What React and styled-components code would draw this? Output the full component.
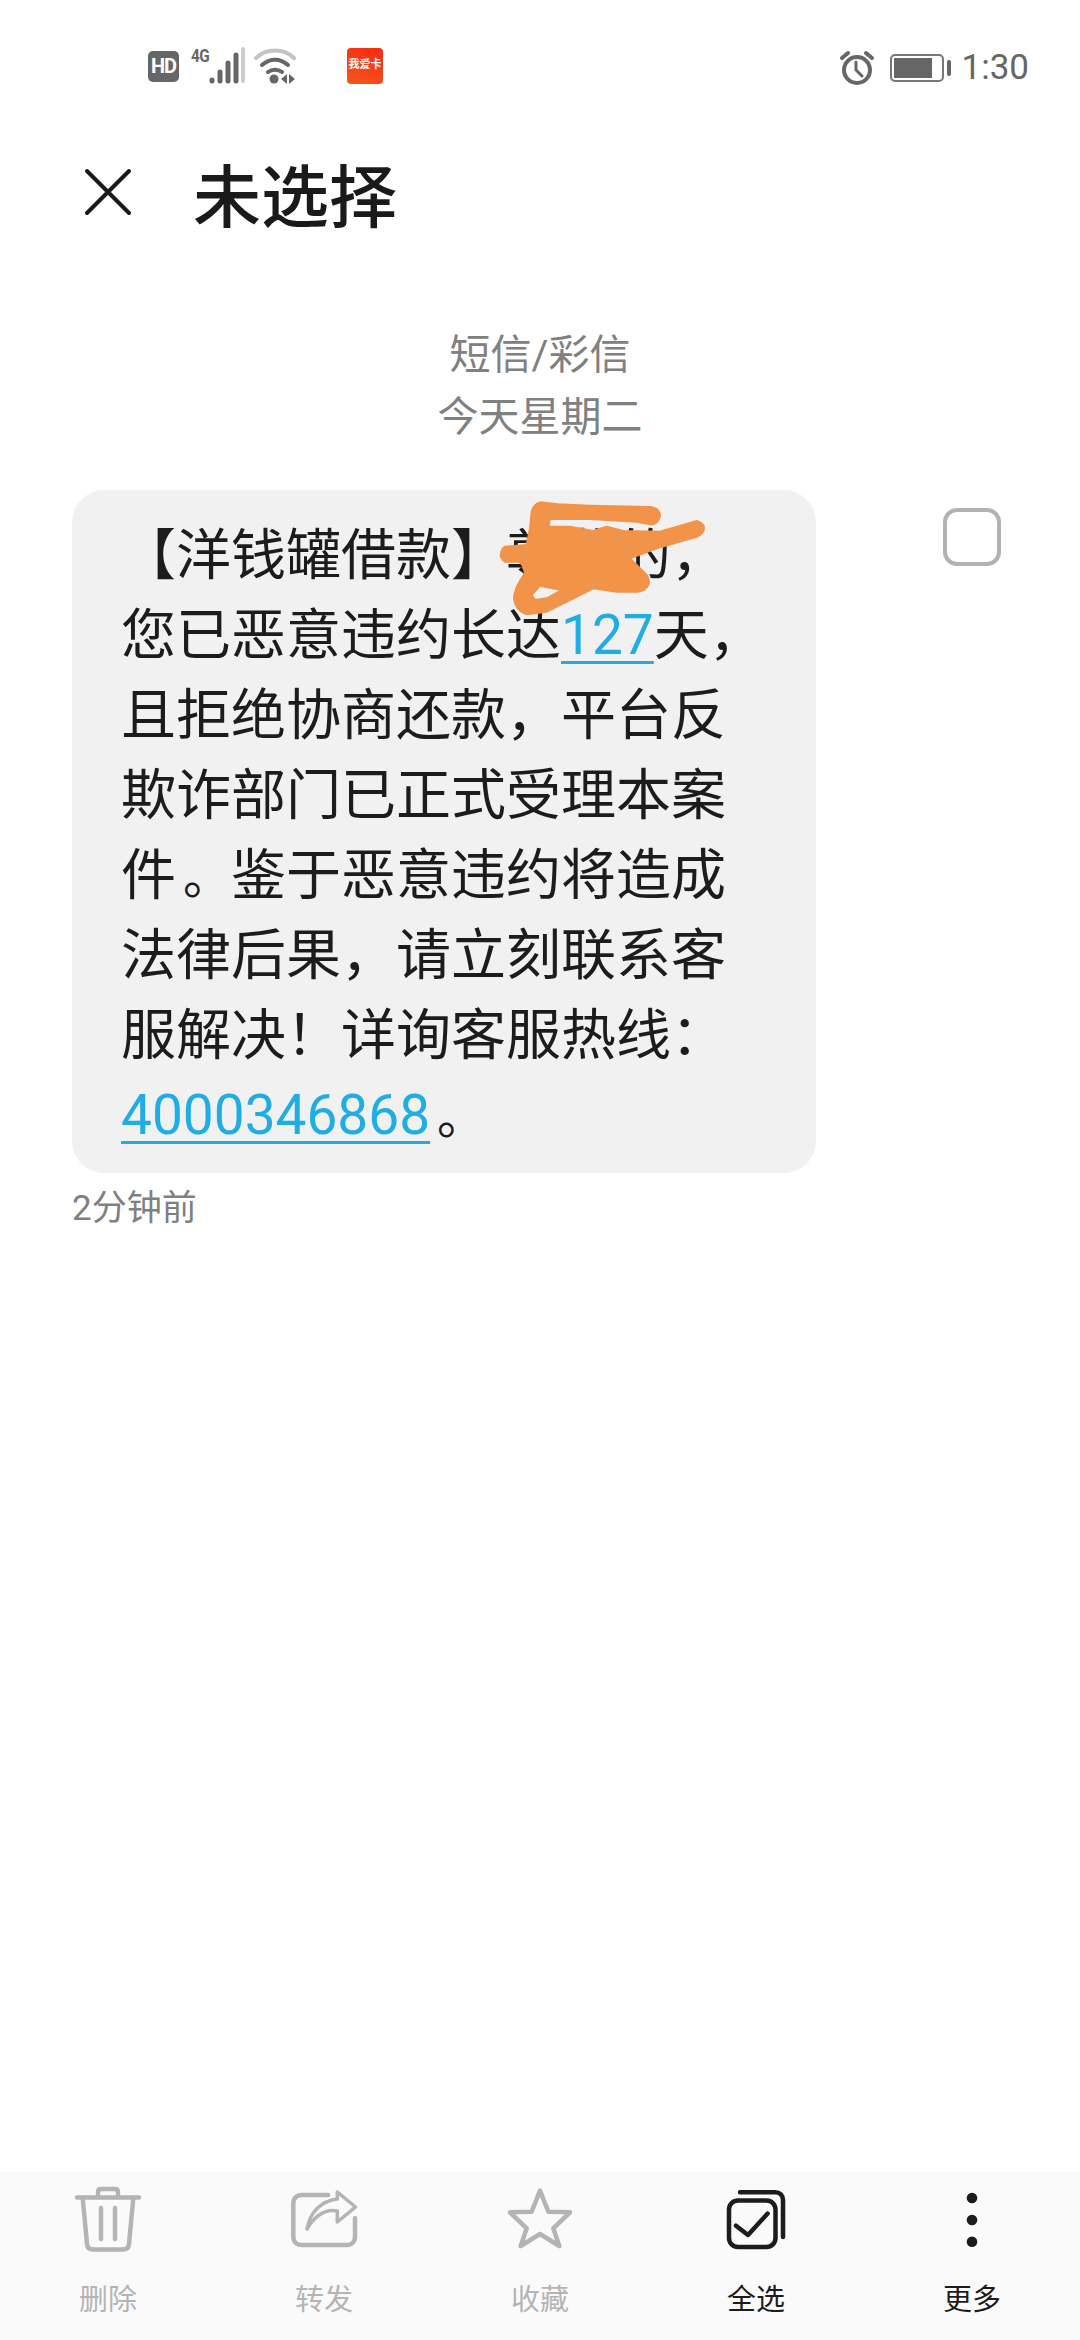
import React from 'react';
import styled, { createGlobalStyle } from 'styled-components';

const GlobalStyle = createGlobalStyle`
  html, body {
    margin: 0;
    padding: 0;
    background: #fff;
    font-family: Roboto, "Noto Sans CJK SC", sans-serif;
  }
`;

const Page = styled.div`
  width: 1080px;
  height: 2340px;
  display: flex;
  flex-direction: column;
  overflow: hidden;
  background: #fff;
`;

const StatusBar = styled.div`
  height: 130px;
  flex: none;
  display: flex;
  align-items: flex-start;
  padding: 47px 51px 0 148px;
  box-sizing: border-box;
  color: #666;
`;

const HdBadge = styled.span`
  width: 31px;
  height: 31px;
  margin-top: 4px;
  border-radius: 5px;
  background: #666;
  color: #fff;
  font-size: 20px;
  font-weight: 700;
  line-height: 31px;
  text-align: center;
  letter-spacing: -1px;
`;

const NetLabel = styled.span`
  margin: 0 0 0 12px;
  font-size: 18px;
  line-height: 18px;
  font-weight: 700;
  letter-spacing: -0.5px;
  transform: scaleX(0.85);
  transform-origin: left;
  width: 17px;
`;

const SignalBars = styled.svg`
  width: 36px;
  height: 38px;
  margin-left: 1px;
`;

const Wifi = styled.svg`
  width: 42px;
  height: 38px;
  margin-left: 9px;
`;

const AppIcon = styled.span`
  width: 36px;
  height: 36px;
  margin: 1px 0 0 51px;
  border-radius: 4px;
  background: linear-gradient(20deg, #f4581c, #f52a12);
  color: #fff;
  font-size: 11px;
  font-weight: 700;
  line-height: 34px;
  text-align: center;
  white-space: nowrap;
`;

const StatusRight = styled.div`
  margin: 2px 0 0 auto;
  display: flex;
  align-items: center;
  height: 38px;
`;

const Battery = styled.span`
  width: 54px;
  height: 28px;
  margin-left: 15px;
  box-sizing: border-box;
  border: 2px solid #777;
  border-radius: 5px;
  padding: 2px;
  display: flex;
`;

const BatteryFill = styled.span`
  width: 38px;
  background: #666;
`;

const BatteryNub = styled.span`
  width: 4px;
  height: 16px;
  margin-left: 3px;
  border-radius: 2px;
  background: #666;
`;

const Clock = styled.span`
  margin-left: 11px;
  font-size: 35px;
  line-height: 38px;
  color: #666;
`;

const Header = styled.header`
  height: 130px;
  flex: none;
  display: flex;
  align-items: center;
  padding: 0 0 6px 84px;
  box-sizing: border-box;
`;

const CloseIcon = styled.svg`
  width: 48px;
  height: 48px;
`;

const Title = styled.h1`
  margin: 0 0 0 61px;
  font-size: 68px;
  font-weight: 500;
  color: #1a1a1a;
`;

const DateBlock = styled.div`
  padding-top: 64px;
  text-align: center;
  font-size: 41px;
  line-height: 62px;
  color: #808080;
`;

const MessageRow = styled.div`
  margin-top: 42px;
  padding-left: 72px;
  display: flex;
  align-items: flex-start;
`;

const Bubble = styled.div`
  position: relative;
  width: 744px;
  box-sizing: border-box;
  padding: 25px 0 18px 49px;
  border-radius: 32px;
  background: #f1f1f1;
  color: #1c1c1c;
  font-size: 55px;
  line-height: 80px;
  white-space: nowrap;
`;

const Link = styled.span`
  color: #20ade5;
  text-decoration: underline;
  text-decoration-thickness: 3px;
  text-underline-offset: 7px;
`;

const Stop = styled.span`
  margin-left: 7px;
  font-size: 48px;
  line-height: 1;
`;

const Scribble = styled.svg`
  position: absolute;
  left: 418px;
  top: 5px;
  width: 230px;
  height: 135px;
`;

const CheckBox = styled.span`
  width: 58px;
  height: 58px;
  margin: 18px 0 0 127px;
  box-sizing: border-box;
  border: 4px solid #b2b2b2;
  border-radius: 14px;
`;

const TimeAgo = styled.div`
  margin: 16px 0 0 72px;
  font-size: 35px;
  line-height: 40px;
  color: #808080;
`;

const Toolbar = styled.nav`
  margin-top: auto;
  height: 168px;
  flex: none;
  display: grid;
  grid-template-columns: repeat(5, 216px);
  background: #fafafa;
`;

const ToolItem = styled.div`
  display: flex;
  flex-direction: column;
  align-items: center;
  padding-top: 12px;
  color: ${p => (p.$active ? '#1c1c1c' : '#b4b4b4')};
`;

const ToolIcon = styled.svg`
  width: 72px;
  height: 72px;
  display: block;
`;

const ToolLabel = styled.span`
  margin-top: 24px;
  font-size: 29px;
  line-height: 40px;
`;

function StatusIcons() {
  return (
    <>
      <HdBadge>HD</HdBadge>
      <NetLabel>4G</NetLabel>
      <SignalBars viewBox="0 0 36 38">
        <g fill="none" stroke="#666" strokeWidth="5" strokeLinecap="round">
          <path d="M3 33v1" />
          <path d="M11 25v9" />
          <path d="M19 16v18" />
          <path d="M27 8v26" />
        </g>
        <path d="M34 2v32" fill="none" stroke="#ccc" strokeWidth="4" strokeLinecap="round" />
      </SignalBars>
      <Wifi viewBox="0 0 42 38">
        <path d="M2 11C12 1 30 1 40 11" fill="none" stroke="#c4c4c4" strokeWidth="4" strokeLinecap="round" />
        <path d="M8 18c8-7 18-7 26 0" fill="none" stroke="#666" strokeWidth="4" strokeLinecap="round" />
        <path d="M14 25c4-3 10-3 14 0" fill="none" stroke="#666" strokeWidth="4" strokeLinecap="round" />
        <circle cx="20" cy="32" r="4.5" fill="#666" />
        <path d="M33 27v10l-6-5zM35 27v10l6-5z" fill="#666" />
      </Wifi>
      <AppIcon>我爱卡</AppIcon>
    </>
  );
}

function App() {
  return (
    <Page>
      <GlobalStyle />
      <StatusBar>
        <StatusIcons />
        <StatusRight>
          <svg width="36" height="36" viewBox="0 0 36 36" fill="none" stroke="#666" strokeLinecap="round">
            <circle cx="18" cy="20" r="13" strokeWidth="4" />
            <path d="M17 12v8l6 6" strokeWidth="3" />
            <path d="M3 8l6-5M33 8l-6-5" strokeWidth="4" />
          </svg>
          <Battery><BatteryFill /></Battery>
          <BatteryNub />
          <Clock>1:30</Clock>
        </StatusRight>
      </StatusBar>

      <Header>
        <CloseIcon viewBox="0 0 48 48" fill="none" stroke="#1a1a1a" strokeWidth="4" strokeLinecap="round">
          <path d="M3 3l42 42M45 3L3 45" />
        </CloseIcon>
        <Title>未选择</Title>
      </Header>

      <DateBlock>
        短信/彩信
        <br />
        今天星期二
      </DateBlock>

      <MessageRow>
        <Bubble>
          【洋钱罐借款】尊敬的，
          <br />
          您已恶意违约长达<Link>127</Link>天，
          <br />
          且拒绝协商还款，平台反
          <br />
          欺诈部门已正式受理本案
          <br />
          件<Stop>。</Stop>鉴于恶意违约将造成
          <br />
          法律后果，请立刻联系客
          <br />
          服解决！详询客服热线：
          <br />
          <Link>4000346868</Link><Stop>。</Stop>
          <Scribble viewBox="0 0 690 405">
            <path
              fill="#f2934a"
              fillRule="evenodd"
              stroke="#f2934a"
              strokeWidth="6"
              strokeLinejoin="round"
              d="M150 22L205 28L300 32L480 36Q510 40 510 62Q505 90 480 88L440 80L300 72L180 72L175 95L240 95L310 108L350 95L400 108L510 110L620 78Q642 85 642 100Q640 118 620 125L500 160L420 190L470 240Q480 255 476 268Q465 290 440 290L380 290L310 280L240 315L170 350L110 358Q75 345 72 310Q72 280 105 235Q100 205 85 200L45 200Q32 190 32 180Q35 160 45 155L110 150L120 100L125 50Q130 28 150 22Z
                 M125 300L150 272L215 285L170 310L135 315Z"
            />
          </Scribble>
        </Bubble>
        <CheckBox />
      </MessageRow>
      <TimeAgo>2分钟前</TimeAgo>

      <Toolbar>
        <ToolItem>
          <ToolIcon viewBox="0 0 72 72" fill="none" stroke="currentColor" strokeWidth="4.5" strokeLinecap="round" strokeLinejoin="round">
            <path d="M5 13.5H67" />
            <path d="M10.7 14L15 60c.3 3.500 2.500 5.500 6 5.500h30c3.500 0 5.700-2 6-5.500L61.300 14" />
            <path d="M26 13V8c0-2 1-3 3-3h14c2 0 3 1 3 3v5" />
            <path d="M29 24v31M43 24v31" />
          </ToolIcon>
          <ToolLabel>删除</ToolLabel>
        </ToolItem>
        <ToolItem>
          <ToolIcon viewBox="0 0 72 72" fill="none" stroke="currentColor" strokeWidth="4.500" strokeLinecap="round" strokeLinejoin="round">
            <path d="M40 11H13.700c-5 0-8.400 3.400-8.400 8.300v33.400c0 5 3.400 8.300 8.400 8.300h45c5 0 8.300-3.300 8.300-8.300V34.300" />
            <path strokeWidth="3.500" d="M49.300 8L67.500 23L49.300 38V27C38 25 28 30 19 45C22 28 33 17 49.300 15Z" />
          </ToolIcon>
          <ToolLabel>转发</ToolLabel>
        </ToolItem>
        <ToolItem>
          <ToolIcon viewBox="0 0 72 72" fill="none" stroke="currentColor" strokeWidth="4.500" strokeLinejoin="round">
            <path d="M36 6.700L44.300 27.700L66 28.300L49.300 44.300L55.300 62L36 50L16.700 62L22.700 44.300L6 28.300L27.700 27.700Z" />
          </ToolIcon>
          <ToolLabel>收藏</ToolLabel>
        </ToolItem>
        <ToolItem $active>
          <ToolIcon viewBox="0 0 72 72" fill="none" stroke="currentColor" strokeLinecap="round" strokeLinejoin="round">
            <rect x="9" y="16.500" width="46.500" height="46.500" rx="9" strokeWidth="4.500" />
            <path d="M20 8.200H55c5 0 8 3 8 8V53" strokeWidth="4.500" />
            <path d="M16 41.700L28 51L47.600 29.600" strokeWidth="4.500" />
          </ToolIcon>
          <ToolLabel>全选</ToolLabel>
        </ToolItem>
        <ToolItem $active>
          <ToolIcon viewBox="0 0 72 72" fill="currentColor">
            <circle cx="36" cy="14" r="5.300" />
            <circle cx="36" cy="36" r="5.300" />
            <circle cx="36" cy="57.700" r="5.300" />
          </ToolIcon>
          <ToolLabel>更多</ToolLabel>
        </ToolItem>
      </Toolbar>
    </Page>
  );
}

export default App;
